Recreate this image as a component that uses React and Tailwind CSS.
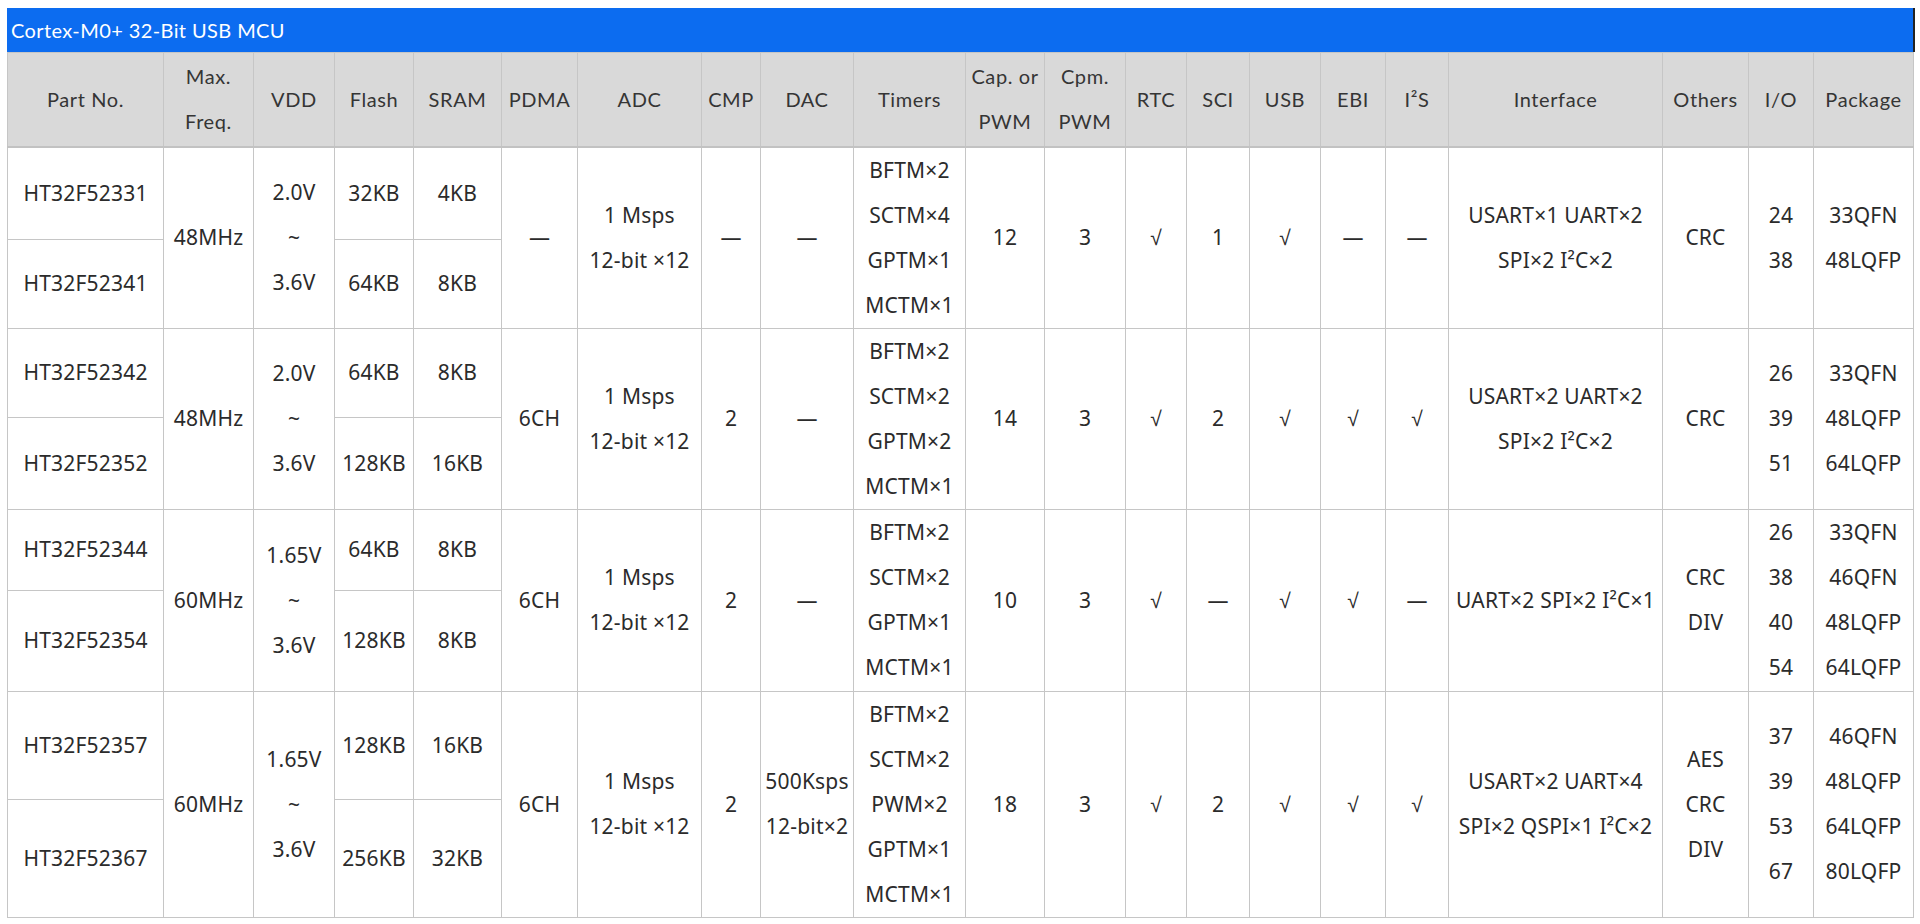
import React from 'react';

const headers = [
  ['Part No.'],
  ['Max.', 'Freq.'],
  ['VDD'],
  ['Flash'],
  ['SRAM'],
  ['PDMA'],
  ['ADC'],
  ['CMP'],
  ['DAC'],
  ['Timers'],
  ['Cap. or', 'PWM'],
  ['Cpm.', 'PWM'],
  ['RTC'],
  ['SCI'],
  ['USB'],
  ['EBI'],
  ['I²S'],
  ['Interface'],
  ['Others'],
  ['I/O'],
  ['Package'],
];

const colWidths = [156, 90, 81, 79, 88, 76, 124, 59, 93, 112, 79, 81, 61, 63, 71, 65, 63, 214, 86, 65, 100];

const groups = [
  {
    parts: [
      { no: 'HT32F52331', flash: '32KB', sram: '4KB', h: 'h-[93px]' },
      { no: 'HT32F52341', flash: '64KB', sram: '8KB', h: 'h-[88px]' },
    ],
    freq: ['48MHz'],
    vdd: ['2.0V', '~', '3.6V'],
    pdma: ['—'],
    adc: ['1 Msps', '12-bit ×12'],
    cmp: ['—'],
    dac: ['—'],
    timers: ['BFTM×2', 'SCTM×4', 'GPTM×1', 'MCTM×1'],
    cap: ['12'],
    cpm: ['3'],
    rtc: ['√'],
    sci: ['1'],
    usb: ['√'],
    ebi: ['—'],
    i2s: ['—'],
    iface: ['USART×1 UART×2', 'SPI×2 I²C×2'],
    others: ['CRC'],
    io: ['24', '38'],
    pkg: ['33QFN', '48LQFP'],
  },
  {
    parts: [
      { no: 'HT32F52342', flash: '64KB', sram: '8KB', h: 'h-[89px]' },
      { no: 'HT32F52352', flash: '128KB', sram: '16KB', h: 'h-[92px]' },
    ],
    freq: ['48MHz'],
    vdd: ['2.0V', '~', '3.6V'],
    pdma: ['6CH'],
    adc: ['1 Msps', '12-bit ×12'],
    cmp: ['2'],
    dac: ['—'],
    timers: ['BFTM×2', 'SCTM×2', 'GPTM×2', 'MCTM×1'],
    cap: ['14'],
    cpm: ['3'],
    rtc: ['√'],
    sci: ['2'],
    usb: ['√'],
    ebi: ['√'],
    i2s: ['√'],
    iface: ['USART×2 UART×2', 'SPI×2 I²C×2'],
    others: ['CRC'],
    io: ['26', '39', '51'],
    pkg: ['33QFN', '48LQFP', '64LQFP'],
  },
  {
    parts: [
      { no: 'HT32F52344', flash: '64KB', sram: '8KB', h: 'h-[81px]' },
      { no: 'HT32F52354', flash: '128KB', sram: '8KB', h: 'h-[101px]' },
    ],
    freq: ['60MHz'],
    vdd: ['1.65V', '~', '3.6V'],
    pdma: ['6CH'],
    adc: ['1 Msps', '12-bit ×12'],
    cmp: ['2'],
    dac: ['—'],
    timers: ['BFTM×2', 'SCTM×2', 'GPTM×1', 'MCTM×1'],
    cap: ['10'],
    cpm: ['3'],
    rtc: ['√'],
    sci: ['—'],
    usb: ['√'],
    ebi: ['√'],
    i2s: ['—'],
    iface: ['UART×2 SPI×2 I²C×1'],
    others: ['CRC', 'DIV'],
    io: ['26', '38', '40', '54'],
    pkg: ['33QFN', '46QFN', '48LQFP', '64LQFP'],
  },
  {
    parts: [
      { no: 'HT32F52357', flash: '128KB', sram: '16KB', h: 'h-[108px]' },
      { no: 'HT32F52367', flash: '256KB', sram: '32KB', h: 'h-[118px]' },
    ],
    freq: ['60MHz'],
    vdd: ['1.65V', '~', '3.6V'],
    pdma: ['6CH'],
    adc: ['1 Msps', '12-bit ×12'],
    cmp: ['2'],
    dac: ['500Ksps', '12-bit×2'],
    timers: ['BFTM×2', 'SCTM×2', 'PWM×2', 'GPTM×1', 'MCTM×1'],
    cap: ['18'],
    cpm: ['3'],
    rtc: ['√'],
    sci: ['2'],
    usb: ['√'],
    ebi: ['√'],
    i2s: ['√'],
    iface: ['USART×2 UART×4', 'SPI×2 QSPI×1 I²C×2'],
    others: ['AES', 'CRC', 'DIV'],
    io: ['37', '39', '53', '67'],
    pkg: ['46QFN', '48LQFP', '64LQFP', '80LQFP'],
  },
];

const cell = 'border border-[#c6c6c6] text-center align-middle p-0 whitespace-nowrap';

const Lines = ({ lines }) => lines.map((l, i) => <div key={i}>{l}</div>);

const Span = ({ lines }) => (
  <td rowSpan={2} className={cell}>
    <Lines lines={lines} />
  </td>
);

export default function App() {
  return (
    <div className="min-h-screen bg-white px-[7px] pt-[8px]">
      <div className="w-[1908px] h-[44px] bg-[#0c6cf0] border-r-2 border-[#222] flex items-center pl-[4px] text-white text-[20px] tracking-[0.4px] font-['Lato',sans-serif]">
        Cortex-M0+ 32-Bit USB MCU
      </div>
      <table className="w-[1907px] table-fixed border-collapse text-[#2b2b2b] leading-[45px]">
        <colgroup>
          {colWidths.map((w, i) => (
            <col key={i} style={{ width: w }} />
          ))}
        </colgroup>
        <thead>
          <tr className="h-[94px] bg-[#d9d9d9] font-['Lato',sans-serif] text-[20px] tracking-[0.6px] text-[#353535]">
            {headers.map((h, i) => (
              <th key={i} className="border border-[#c6c6c6] border-b-2 border-b-[#c2c2c2] font-normal text-center align-middle p-0 whitespace-nowrap">
                <Lines lines={h} />
              </th>
            ))}
          </tr>
        </thead>
        <tbody className="font-['Noto_Sans',sans-serif] text-[21px] tracking-[0.2px]">
          {groups.map((g) =>
            g.parts.map((p, i) => (
              <tr key={p.no} className={p.h}>
                <td className={cell}>{p.no}</td>
                {i === 0 && <Span lines={g.freq} />}
                {i === 0 && <Span lines={g.vdd} />}
                <td className={cell}>{p.flash}</td>
                <td className={cell}>{p.sram}</td>
                {i === 0 && (
                  <>
                    <Span lines={g.pdma} />
                    <Span lines={g.adc} />
                    <Span lines={g.cmp} />
                    <Span lines={g.dac} />
                    <Span lines={g.timers} />
                    <Span lines={g.cap} />
                    <Span lines={g.cpm} />
                    <Span lines={g.rtc} />
                    <Span lines={g.sci} />
                    <Span lines={g.usb} />
                    <Span lines={g.ebi} />
                    <Span lines={g.i2s} />
                    <Span lines={g.iface} />
                    <Span lines={g.others} />
                    <Span lines={g.io} />
                    <Span lines={g.pkg} />
                  </>
                )}
              </tr>
            ))
          )}
        </tbody>
      </table>
    </div>
  );
}
